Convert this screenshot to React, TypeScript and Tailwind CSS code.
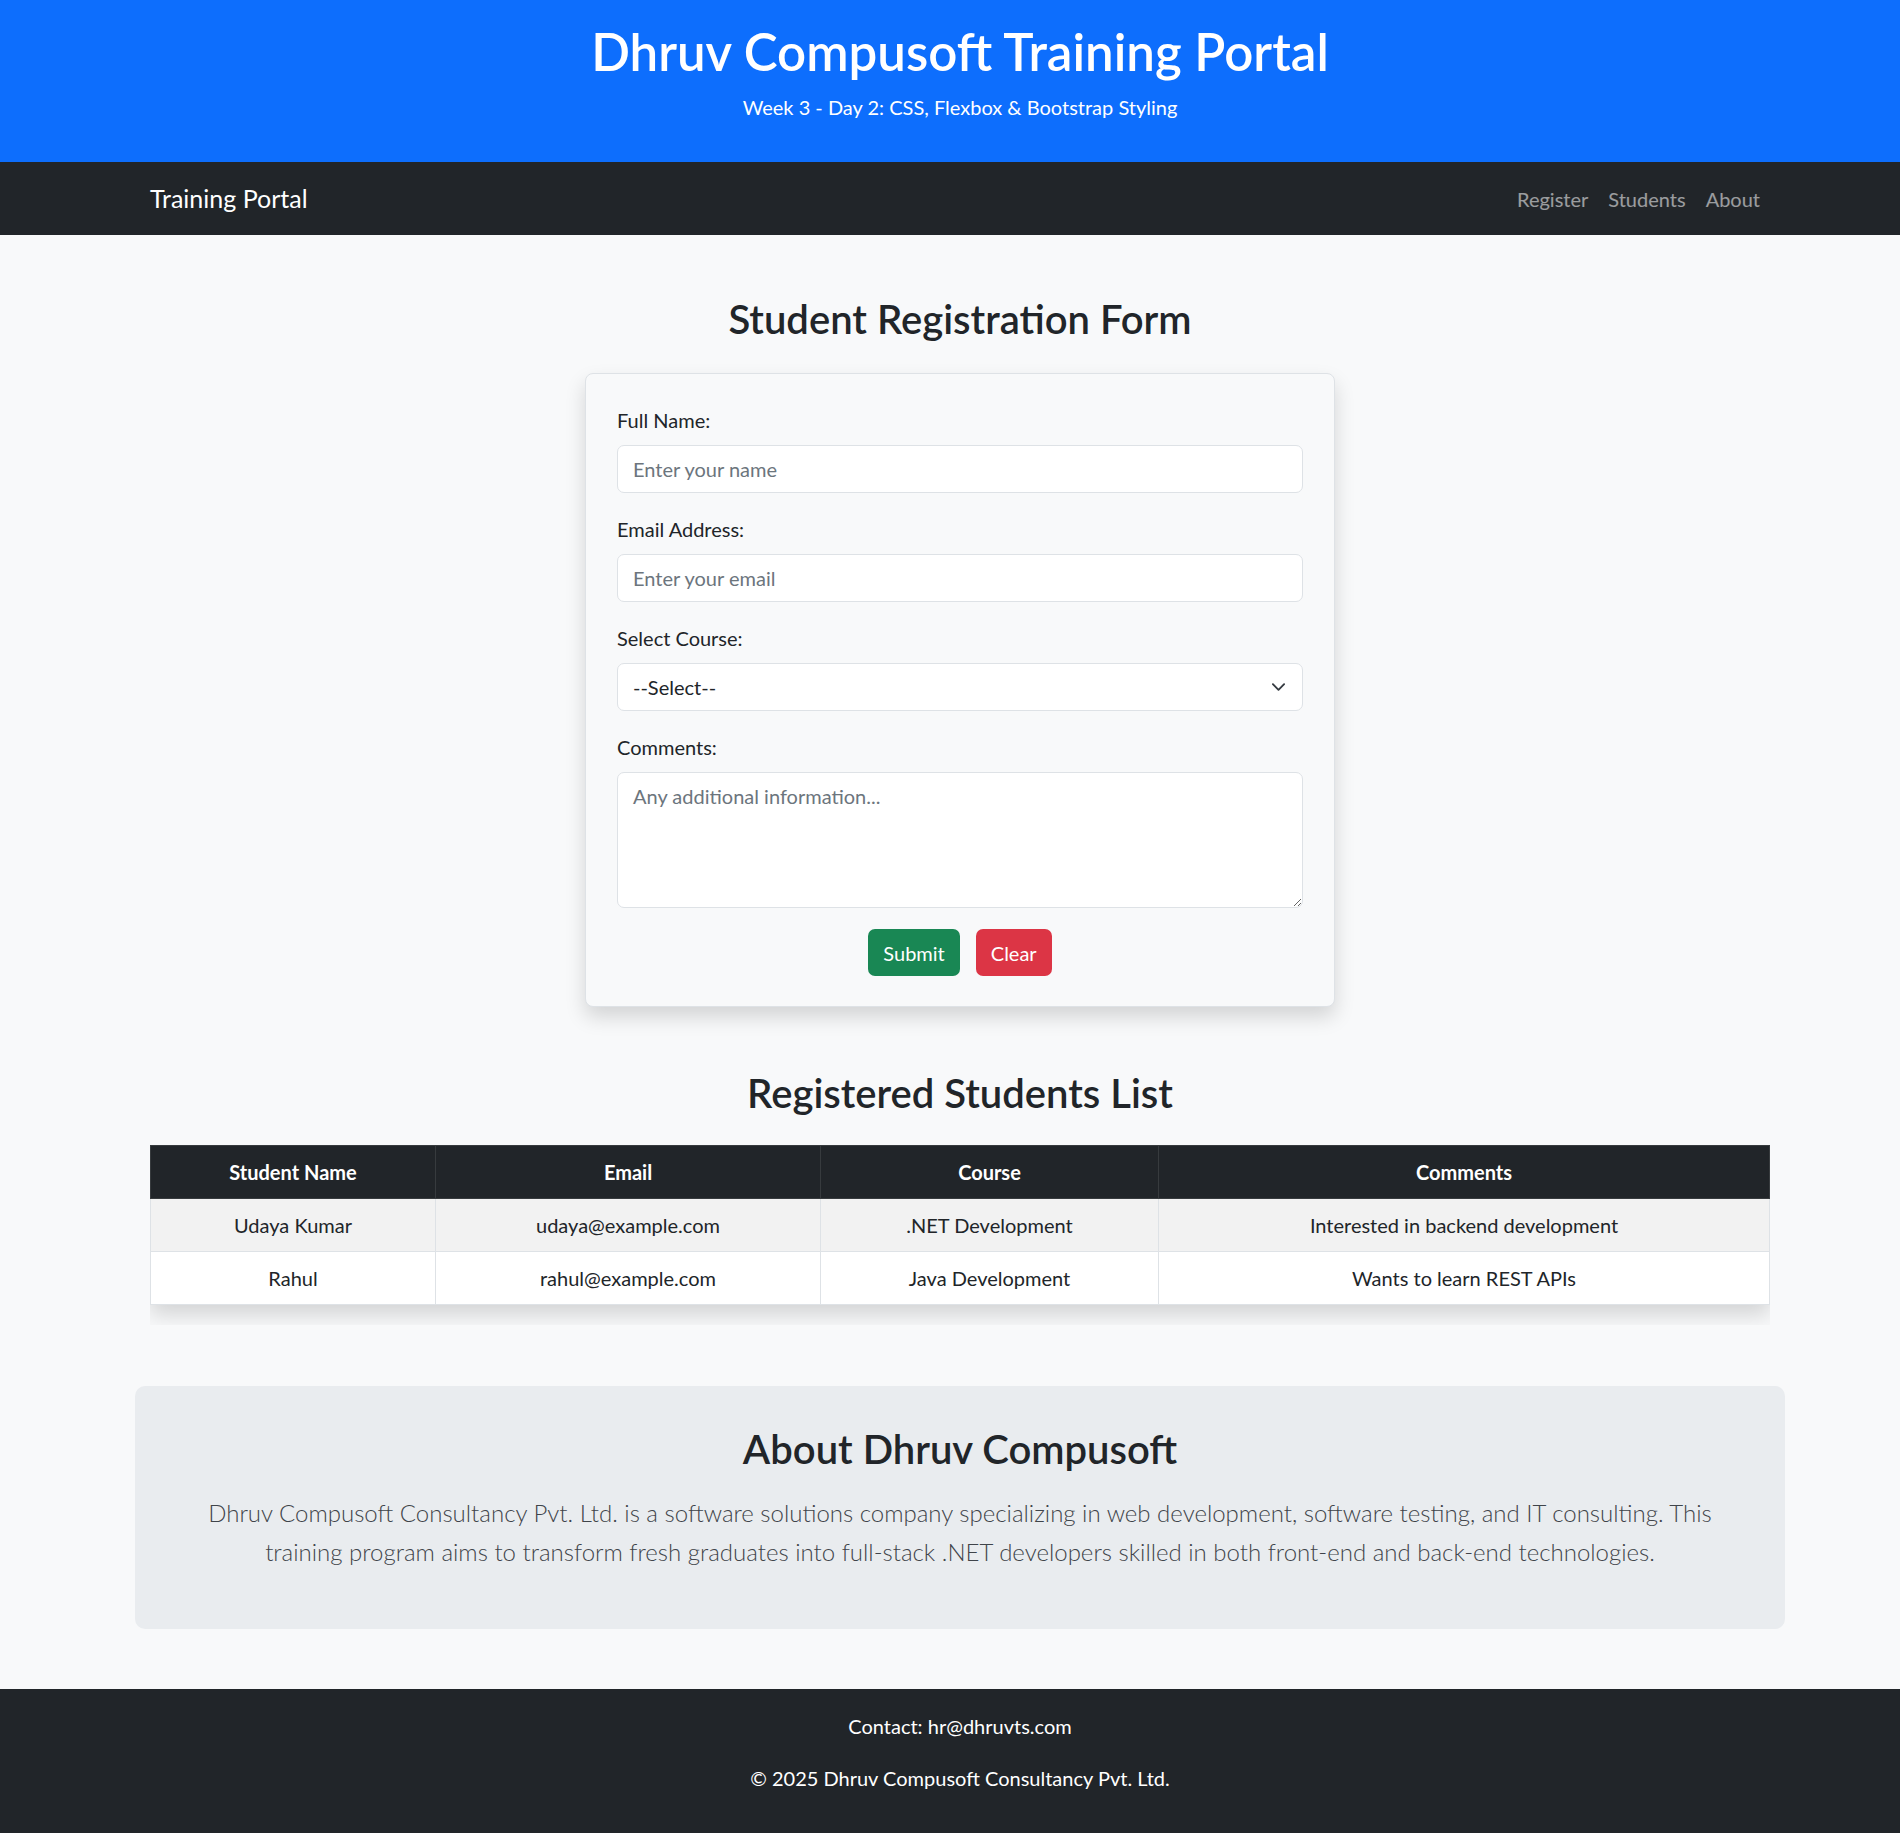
import { useState } from 'react'

const students = [
  { name: 'Udaya Kumar', email: 'udaya@example.com', course: '.NET Development', comments: 'Interested in backend development' },
  { name: 'Rahul', email: 'rahul@example.com', course: 'Java Development', comments: 'Wants to learn REST APIs' },
]

const inputCls =
  'block w-full h-[48px] px-[15px] py-[8px] bg-white border border-[#dee2e6] rounded-[7px] text-[20px] leading-[30px] text-[#212529] placeholder:text-[#6c757d] outline-none'

export default function App() {
  const [course, setCourse] = useState('')

  return (
    <div className="w-[1900px] overflow-hidden bg-[#f8f9fa]">
      <div className="w-[1920px] font-['Lato','Noto_Sans',sans-serif] text-[20px] leading-[1.5] text-[#212529]">
        {/* 頁首 */}
        <header className="bg-[#0d6efd] text-white text-center pt-[22px] pb-[20px]">
          <h1 className="text-[51px] font-semibold leading-[60px] mb-[10px]">Dhruv Compusoft Training Portal</h1>
          <p className="mb-[20px]">Week 3 - Day 2: CSS, Flexbox &amp; Bootstrap Styling</p>
        </header>

        <nav className="bg-[#212529] h-[73px]">
          <div className="w-[1650px] mx-auto px-[15px] h-full flex items-center justify-between">
            <a href="#" className="text-white text-[25px] leading-[1.5]">Training Portal</a>
            <ul className="flex">
              {['Register', 'Students', 'About'].map((l) => (
                <li key={l}>
                  <a href="#" className="block px-[10px] py-[10px] text-white/55">{l}</a>
                </li>
              ))}
            </ul>
          </div>
        </nav>

        <main className="w-[1650px] mx-auto px-[15px] pb-[60px]">
          {/* 註冊表單 */}
          <section className="pt-[60px]">
            <h2 className="text-[40px] font-semibold leading-[48px] text-center mb-[30px]">Student Registration Form</h2>
            <form className="w-[750px] mx-auto bg-[#f8f9fa] border border-[#dee2e6] rounded-[8px] p-[31px] pb-[30px] shadow-[0_10px_20px_rgba(0,0,0,0.15)]">
              <div className="mb-[21px]">
                <label className="block mb-[10px]">Full Name:</label>
                <input type="text" placeholder="Enter your name" className={inputCls} />
              </div>
              <div className="mb-[21px]">
                <label className="block mb-[10px]">Email Address:</label>
                <input type="email" placeholder="Enter your email" className={inputCls} />
              </div>
              <div className="mb-[21px]">
                <label className="block mb-[10px]">Select Course:</label>
                <div className="relative">
                  <select
                    value={course}
                    onChange={(e) => setCourse(e.target.value)}
                    className={`${inputCls} appearance-none pr-[45px]`}
                  >
                    <option value="">--Select--</option>
                    <option>.NET Development</option>
                    <option>Java Development</option>
                  </select>
                  <svg
                    viewBox="0 0 16 16"
                    className="pointer-events-none absolute right-[17px] top-1/2 -translate-y-1/2 w-[15px] h-[15px]"
                  >
                    <path d="m2 5 6 6 6-6" fill="none" stroke="#343a40" strokeWidth="2" strokeLinecap="round" strokeLinejoin="round" />
                  </svg>
                </div>
              </div>
              <div className="mb-[21px]">
                <label className="block mb-[10px]">Comments:</label>
                <textarea placeholder="Any additional information..." className={`${inputCls} h-[136px]`} />
              </div>
              <div className="flex justify-center gap-[16px]">
                <button type="submit" className="h-[47px] px-[15px] rounded-[7px] bg-[#198754] text-white">Submit</button>
                <button type="reset" className="h-[47px] px-[15px] rounded-[7px] bg-[#dc3545] text-white">Clear</button>
              </div>
            </form>
          </section>

          {/* 學生列表 */}
          <section className="pt-[62px]">
            <h2 className="text-[40px] font-semibold leading-[48px] text-center mb-[28px]">Registered Students List</h2>
            <div className="overflow-hidden">
              <table className="w-full border-collapse text-center mb-[20px] shadow-[0_10px_20px_rgba(0,0,0,0.15)]">
                <thead>
                  <tr className="bg-[#212529] text-white">
                    <th className="w-[285px] border border-[#373b3e] py-[11px] px-[10px] font-bold">Student Name</th>
                    <th className="w-[385px] border border-[#373b3e] py-[11px] px-[10px] font-bold">Email</th>
                    <th className="w-[338px] border border-[#373b3e] py-[11px] px-[10px] font-bold">Course</th>
                    <th className="border border-[#373b3e] py-[11px] px-[10px] font-bold">Comments</th>
                  </tr>
                </thead>
                <tbody>
                  {students.map((s, i) => (
                    <tr key={s.email} className={i % 2 === 0 ? 'bg-[#f2f2f2]' : 'bg-white'}>
                      <td className="border border-[#dee2e6] py-[11px] px-[10px]">{s.name}</td>
                      <td className="border border-[#dee2e6] py-[11px] px-[10px]">{s.email}</td>
                      <td className="border border-[#dee2e6] py-[11px] px-[10px]">{s.course}</td>
                      <td className="border border-[#dee2e6] py-[11px] px-[10px]">{s.comments}</td>
                    </tr>
                  ))}
                </tbody>
              </table>
            </div>
          </section>

          {/* 關於 */}
          <section className="mt-[61px] -mx-[15px] bg-[#e9ecef] rounded-[10px] px-[40px] pt-[39px] pb-[38px] text-center">
            <h2 className="text-[40px] font-semibold leading-[48px] mb-[20px]">About Dhruv Compusoft</h2>
            <p className="text-[24px] font-light leading-[39px] text-[#3f444a] mb-[20px] whitespace-nowrap">
              Dhruv Compusoft Consultancy Pvt. Ltd. is a software solutions company specializing in web development, software testing, and IT consulting. This
              <br />
              training program aims to transform fresh graduates into full-stack .NET developers skilled in both front-end and back-end technologies.
            </p>
          </section>
        </main>

        <footer className="bg-[#212529] text-white text-center pt-[22px] pb-[20px]">
          <p className="mb-[22px]">Contact: hr@dhruvts.com</p>
          <p className="mb-[20px]">© 2025 Dhruv Compusoft Consultancy Pvt. Ltd.</p>
        </footer>
      </div>
    </div>
  )
}
